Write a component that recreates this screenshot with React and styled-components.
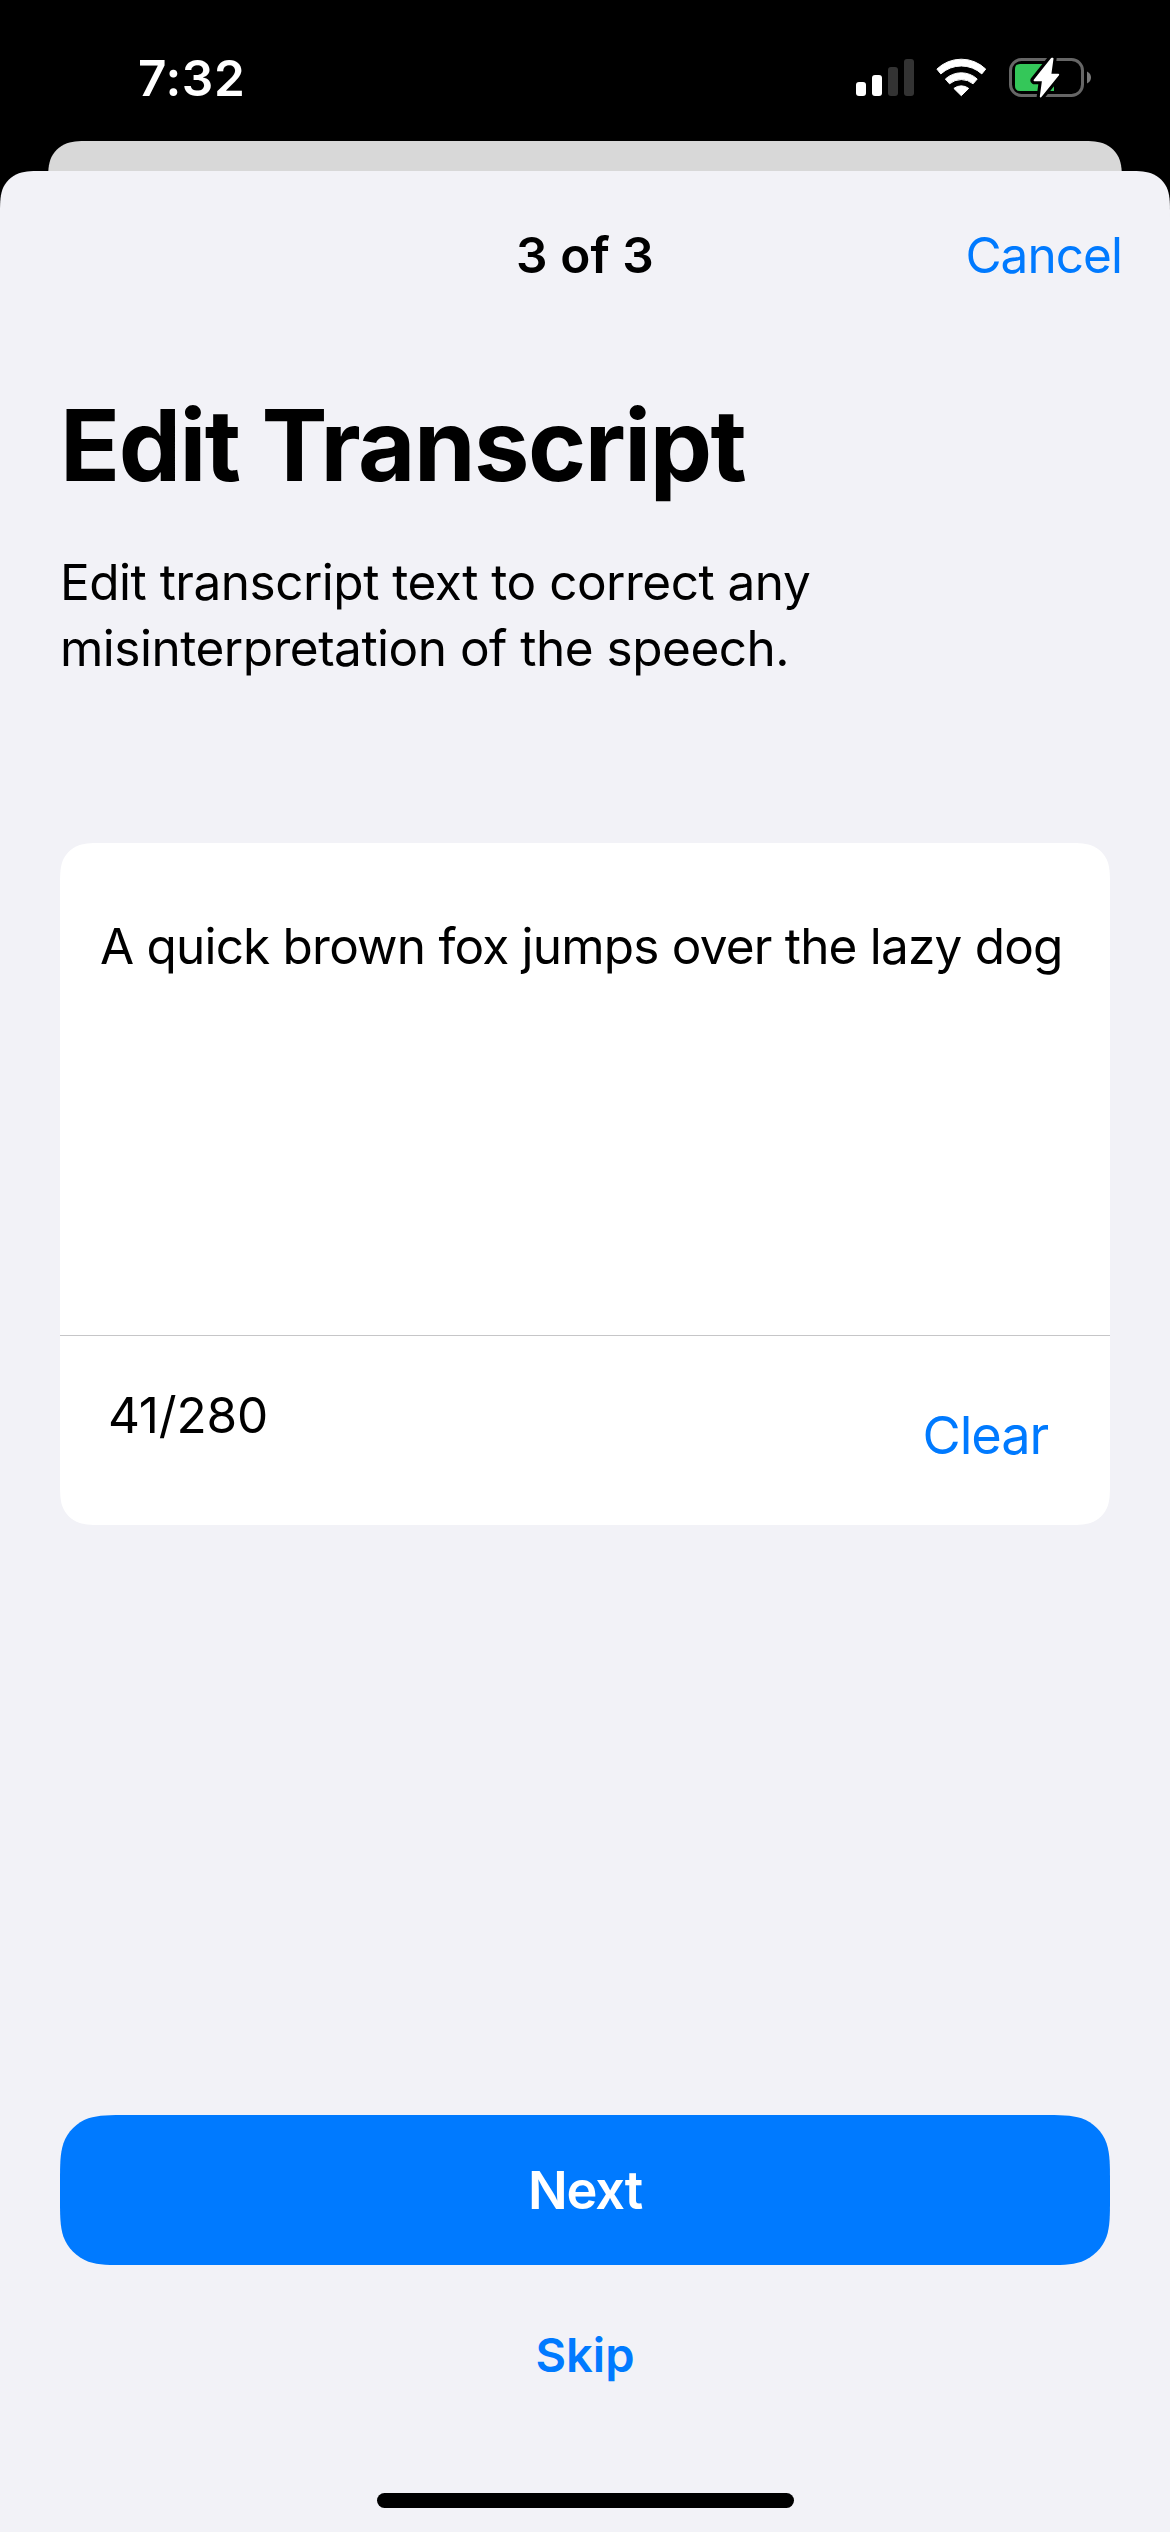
import React, { useState } from "react";
import styled, { createGlobalStyle } from "styled-components";

const BLUE = "#007aff";
const GROUPED = "#f2f2f7";

/* Continuous-curvature rounded rectangle, as used by iOS for cards and sheets. */
function squircle(w, h, r) {
  const a = 1.528665 * r;
  const b = 1.08849 * r;
  const c = 0.868407 * r;
  const d = 0.631494 * r;
  const e = 0.0749115 * r;
  const f = 0.372824 * r;
  const g = 0.16906 * r;
  return [
    `M${a} 0H${w - a}`,
    `C${w - b} 0 ${w - c} 0 ${w - d} ${e}C${w - f} ${g} ${w - g} ${f} ${w - e} ${d}C${w} ${c} ${w} ${b} ${w} ${a}`,
    `V${h - a}`,
    `C${w} ${h - b} ${w} ${h - c} ${w - e} ${h - d}C${w - g} ${h - f} ${w - f} ${h - g} ${w - d} ${h - e}C${w - c} ${h} ${w - b} ${h} ${w - a} ${h}`,
    `H${a}`,
    `C${b} ${h} ${c} ${h} ${d} ${h - e}C${f} ${h - g} ${g} ${h - f} ${e} ${h - d}C0 ${h - c} 0 ${h - b} 0 ${h - a}`,
    `V${a}`,
    `C0 ${b} 0 ${c} ${e} ${d}C${g} ${f} ${f} ${g} ${d} ${e}C${c} 0 ${b} 0 ${a} 0Z`,
  ].join("");
}

const GlobalStyle = createGlobalStyle`
  *, *::before, *::after { box-sizing: border-box; }
  body {
    margin: 0;
    background: #000;
    font-family: Inter, "Liberation Sans", sans-serif;
  }
  button {
    margin: 0;
    padding: 0;
    border: 0;
    background: none;
    font-family: inherit;
    cursor: pointer;
  }
`;

const Screen = styled.main`
  display: flex;
  flex-direction: column;
  width: 1170px;
  height: 2532px;
  overflow: hidden;
  background: #000;
`;

const StatusBar = styled.header`
  display: flex;
  align-items: flex-start;
  justify-content: space-between;
  height: 141px;
  padding: 48px 78px 0 138px;
`;

const Clock = styled.time`
  color: #fff;
  font-size: 49.5px;
  font-weight: 600;
  line-height: 60px;
  letter-spacing: 0.6px;
`;

const StatusIcons = styled.div`
  display: flex;
  align-items: center;
  height: 60px;
  gap: 21px;
`;

const Backdrop = styled.div`
  flex: none;
  width: 1074px;
  height: 120px;
  margin: 0 auto -90px;
  background: #d8d8d8;
  clip-path: path("${squircle(1074, 120, 30)}");
`;

const Sheet = styled.section`
  position: relative;
  display: flex;
  flex-direction: column;
  flex: none;
  height: 2361px;
  padding-bottom: 24px;
  background: ${GROUPED};
  clip-path: path("${squircle(1170, 2440, 30)}");
`;

const NavBar = styled.nav`
  display: grid;
  grid-template-columns: 1fr auto 1fr;
  padding: 54px 48px 0;
  font-size: 49.5px;
  line-height: 60px;
`;

const Step = styled.span`
  grid-column: 2;
  font-weight: 600;
  letter-spacing: 0.1px;
`;

const TextButton = styled.button`
  color: ${BLUE};
  font-size: ${(p) => p.$size}px;
  font-weight: ${(p) => p.$weight || 400};
  letter-spacing: ${(p) => p.$tracking || 0}px;
  line-height: 60px;
`;

const CancelButton = styled(TextButton)`
  justify-self: end;
`;

const Intro = styled.div`
  padding: 100px 60px 0;
`;

const Title = styled.h1`
  margin: 0;
  font-size: 99px;
  font-weight: 700;
  line-height: 120px;
  letter-spacing: -1.5px;
`;

const Description = styled.p`
  margin: 44px 0 0;
  max-width: 800px;
  font-size: 49.5px;
  line-height: 66px;
  letter-spacing: -0.5px;
`;

const Card = styled.div`
  display: flex;
  flex-direction: column;
  flex: none;
  width: 1050px;
  height: 682px;
  margin: 162px auto 0;
  background: #fff;
  clip-path: path("${squircle(1050, 682, 30)}");
`;

const Transcript = styled.div`
  height: 492px;
  padding: 70px 40px 0;
  font-size: 49.5px;
  line-height: 66px;
  letter-spacing: -0.8px;
  white-space: nowrap;
`;

const CardFooter = styled.div`
  display: flex;
  align-items: flex-start;
  justify-content: space-between;
  flex: 1;
  border-top: 1px solid #c6c6c8;
  padding: 49px 62px 0 48px;
`;

const Count = styled.span`
  font-size: 49.5px;
  line-height: 60px;
  letter-spacing: -0.15px;
`;

const ClearButton = styled(TextButton)`
  margin-top: 20px;
`;

const Actions = styled.div`
  display: flex;
  flex-direction: column;
  align-items: center;
  gap: 60px;
  margin-top: auto;
  padding-bottom: 108px;
`;

const PrimaryButton = styled.button`
  width: 1050px;
  height: 150px;
  background: ${BLUE};
  color: #fff;
  font-size: 52.3px;
  font-weight: 600;
  letter-spacing: -1.15px;
  clip-path: path("${squircle(1050, 150, 45)}");
`;

const HomeIndicator = styled.div`
  flex: none;
  width: 417px;
  height: 15px;
  margin: 0 auto;
  border-radius: 8px;
  background: #000;
`;

function SignalIcon() {
  return (
    <svg width="58" height="40" viewBox="0 0 58 40">
      <rect x="0" y="24" width="10" height="14" rx="3" fill="#fff" />
      <rect x="16" y="17" width="10" height="21" rx="3" fill="#fff" />
      <rect x="32" y="9" width="10" height="29" rx="3" fill="#333" />
      <rect x="48" y="1" width="10" height="37" rx="3" fill="#333" />
    </svg>
  );
}

function WifiIcon() {
  return (
    <svg width="52" height="40" viewBox="-0.6 0 52 40" fill="#fff" stroke="#fff" strokeWidth="1" strokeLinejoin="round">
      <path d="M1.3 11.1A35 35 0 0 1 50.1 11.1L46.2 15.9A30.5 30.5 0 0 0 5.2 15.9Z" />
      <path d="M9.8 21A23.5 23.5 0 0 1 41.6 21L37.5 25.8A18.5 18.5 0 0 0 13.9 25.8Z" />
      <path d="M18.3 30.4A12 12 0 0 1 33.1 30.4L25.7 37.7Z" />
    </svg>
  );
}

const BOLT = "M43.8 2.6L26.5 24.3H34.9L32.7 40.5L50.3 18.6H42.4L44.6 2.6Z";

function BatteryIcon() {
  return (
    <svg width="84" height="44" viewBox="0 0 84 44">
      <rect x="2.5" y="3.5" width="72" height="36" rx="11" fill="none" stroke="#666" strokeWidth="3" />
      <path d="M79 15.500C81.800 16.800 83 19 83 21.500S81.800 26.200 79 27.500Z" fill="#7a7a7a" />
      <path d="M12 8H46V35H12Q7 35 7 30V13Q7 8 12 8Z" fill="#34c759" />
      <path d={BOLT} fill="#000" stroke="#000" strokeWidth="8" strokeLinejoin="round" />
      <path d="M46 10H54V33H46Z" fill="#000" />
      <path d={BOLT} fill="#fff" stroke="#fff" strokeWidth="1.8" strokeLinejoin="round" />
    </svg>
  );
}

export default function App() {
  const [text, setText] = useState("A quick brown fox jumps over the lazy dog");
  return (
    <>
      <GlobalStyle />
      <Screen>
        <StatusBar>
          <Clock>7:32</Clock>
          <StatusIcons>
            <SignalIcon />
            <WifiIcon />
            <BatteryIcon />
          </StatusIcons>
        </StatusBar>
        <Backdrop />
        <Sheet>
          <NavBar>
            <Step>3 of 3</Step>
            <CancelButton $size={49.5} $tracking={-0.96}>Cancel</CancelButton>
          </NavBar>
          <Intro>
            <Title>Edit Transcript</Title>
            <Description>Edit transcript text to correct any misinterpretation of the speech.</Description>
          </Intro>
          <Card>
            <Transcript>{text}</Transcript>
            <CardFooter>
              <Count>{text.length}/280</Count>
              <ClearButton $size={52.3} $tracking={-1.1} onClick={() => setText("")}>Clear</ClearButton>
            </CardFooter>
          </Card>
          <Actions>
            <PrimaryButton>Next</PrimaryButton>
            <TextButton $size={47} $weight={600}>Skip</TextButton>
          </Actions>
          <HomeIndicator />
        </Sheet>
      </Screen>
    </>
  );
}
